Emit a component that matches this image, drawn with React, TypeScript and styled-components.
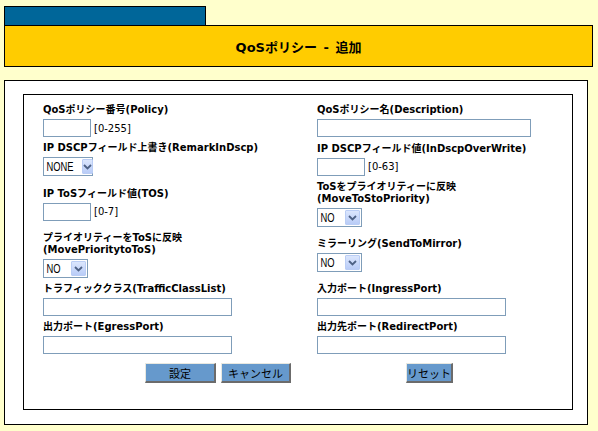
import { Fragment } from 'react'
import styled, { createGlobalStyle } from 'styled-components'

const GlobalStyle = createGlobalStyle`
  html, body {
    margin: 0;
    padding: 0;
    background: #ffffcc;
  }
  body {
    font-family: 'DejaVu Sans', 'Noto Sans CJK JP', sans-serif;
  }
`

type Row = {
  label: string[]
  control: 'input' | 'select'
  width?: number
  value?: string
  hint?: string
}

const leftRows: Row[] = [
  { label: ['QoSポリシー番号(Policy)'], control: 'input', width: 48, hint: '[0-255]' },
  { label: ['IP DSCPフィールド上書き(RemarkInDscp)'], control: 'select', width: 50, value: 'NONE' },
  { label: ['IP ToSフィールド値(TOS)'], control: 'input', width: 48, hint: '[0-7]' },
  { label: ['プライオリティーをToSに反映', '(MovePrioritytoToS)'], control: 'select', width: 45, value: 'NO' },
  { label: ['トラフィッククラス(TrafficClassList)'], control: 'input', width: 189 },
  { label: ['出力ポート(EgressPort)'], control: 'input', width: 189 },
]

const rightRows: Row[] = [
  { label: ['QoSポリシー名(Description)'], control: 'input', width: 214 },
  { label: ['IP DSCPフィールド値(InDscpOverWrite)'], control: 'input', width: 48, hint: '[0-63]' },
  { label: ['ToSをプライオリティーに反映', '(MoveToStoPriority)'], control: 'select', width: 45, value: 'NO' },
  { label: ['ミラーリング(SendToMirror)'], control: 'select', width: 45, value: 'NO' },
  { label: ['入力ポート(IngressPort)'], control: 'input', width: 189 },
  { label: ['出力先ポート(RedirectPort)'], control: 'input', width: 189 },
]

const Field = ({ row }: { row: Row }) => (
  <Cell>
    <Label>
      {row.label.map((line) => (
        <span key={line}>{line}</span>
      ))}
    </Label>
    <ControlLine>
      {row.control === 'input' ? (
        <TextBox $width={row.width ?? 48} />
      ) : (
        <SelectBox $width={row.width ?? 45}>
          <SelectValue>{row.value}</SelectValue>
          <SelectArrow>
            <svg width="9" height="6" viewBox="0 0 9 6">
              <path d="M1 1 L4.5 4.5 L8 1" fill="none" stroke="#4d6185" strokeWidth="1.8" />
            </svg>
          </SelectArrow>
        </SelectBox>
      )}
      {row.hint && <Hint>{row.hint}</Hint>}
    </ControlLine>
  </Cell>
)

const App = () => {
  return (
    <Page>
      <GlobalStyle />
      <Tab />
      <Header>QoSポリシー - 追加</Header>
      <Panel>
        <FormBox>
          <FormGrid>
            {leftRows.map((row, i) => (
              <Fragment key={i}>
                <Field row={row} />
                <Field row={rightRows[i]} />
              </Fragment>
            ))}
            <LeftButtons>
              <Button $width={71}>設定</Button>
              <Button $width={70}>キャンセル</Button>
            </LeftButtons>
            <RightButtons>
              <Button $width={47}>リセット</Button>
            </RightButtons>
          </FormGrid>
        </FormBox>
      </Panel>
    </Page>
  )
}

const Page = styled.div`
  width: 598px;
  height: 431px;
  padding: 6px 0 0 4px;
  box-sizing: border-box;
  display: flex;
  flex-direction: column;
`

const Tab = styled.div`
  width: 202px;
  height: 19px;
  background: #006699;
  border: 1px solid #000;
  border-bottom: none;
  box-sizing: border-box;
`

const Header = styled.div`
  width: 589px;
  height: 42px;
  background: #ffcc00;
  border: 1px solid #000;
  box-sizing: border-box;
  display: flex;
  align-items: center;
  justify-content: center;
  font-family: 'DejaVu Sans', 'Noto Sans CJK JP', sans-serif;
  font-size: 13px;
  font-weight: bold;
  word-spacing: 2px;
  color: #000;
`

const Panel = styled.div`
  width: 584px;
  height: 345px;
  margin-top: 13px;
  background: #fff;
  border: 1px solid #000;
  box-sizing: border-box;
  padding: 13px 14px 14px 18px;
`

const FormBox = styled.div`
  height: 100%;
  border: 1px solid #000;
  box-sizing: border-box;
  padding: 9px 0 0 19px;
`

const FormGrid = styled.div`
  display: grid;
  grid-template-columns: 274px 1fr;
  align-items: center;
  row-gap: 5px;
`

const Cell = styled.div`
  display: flex;
  flex-direction: column;
  gap: 3px;
`

const Label = styled.div`
  display: flex;
  flex-direction: column;
  font-size: 10px;
  line-height: 12px;
  font-weight: bold;
  color: #000;
  white-space: nowrap;
`

const ControlLine = styled.div`
  display: flex;
  align-items: center;
  gap: 3px;
`

const TextBox = styled.input<{ $width: number }>`
  width: ${(p) => p.$width}px;
  height: 18px;
  box-sizing: border-box;
  border: 1px solid #7f9db9;
  background: #fff;
  padding: 0 2px;
  margin: 0;
  outline: none;
`

const Hint = styled.span`
  font-size: 10px;
  color: #000;
`

const SelectBox = styled.div<{ $width: number }>`
  width: ${(p) => p.$width}px;
  height: 19px;
  box-sizing: border-box;
  border: 1px solid #7f9db9;
  background: #fff;
  display: flex;
  align-items: center;
  justify-content: space-between;
  padding: 1px;
`

const SelectValue = styled.span`
  display: inline-block;
  font-family: 'Liberation Sans', sans-serif;
  font-size: 12px;
  padding-left: 2px;
  color: #000;
  transform: scaleX(0.78);
  transform-origin: left center;
`

const SelectArrow = styled.span`
  width: 15px;
  height: 15px;
  box-sizing: border-box;
  border: 1px solid #bacdf5;
  border-radius: 1px;
  background: linear-gradient(#dbe6fd, #b9ccf7);
  display: flex;
  align-items: center;
  justify-content: center;
`

const LeftButtons = styled.div`
  display: flex;
  justify-content: flex-end;
  gap: 5px;
  padding: 4px 26px 0 0;
`

const RightButtons = styled.div`
  display: flex;
  padding: 4px 0 0 89px;
`

const Button = styled.button<{ $width: number }>`
  width: ${(p) => p.$width}px;
  height: 20px;
  padding: 0;
  margin: 0;
  box-sizing: border-box;
  background: #6699cc;
  border-style: solid;
  border-width: 1px 2px 2px 1px;
  border-color: #e8e8e0 #6b6b6b #6b6b6b #e8e8e0;
  font-family: 'Noto Sans CJK JP', sans-serif;
  font-size: 11px;
  line-height: 16px;
  color: #000;
`

export default App
